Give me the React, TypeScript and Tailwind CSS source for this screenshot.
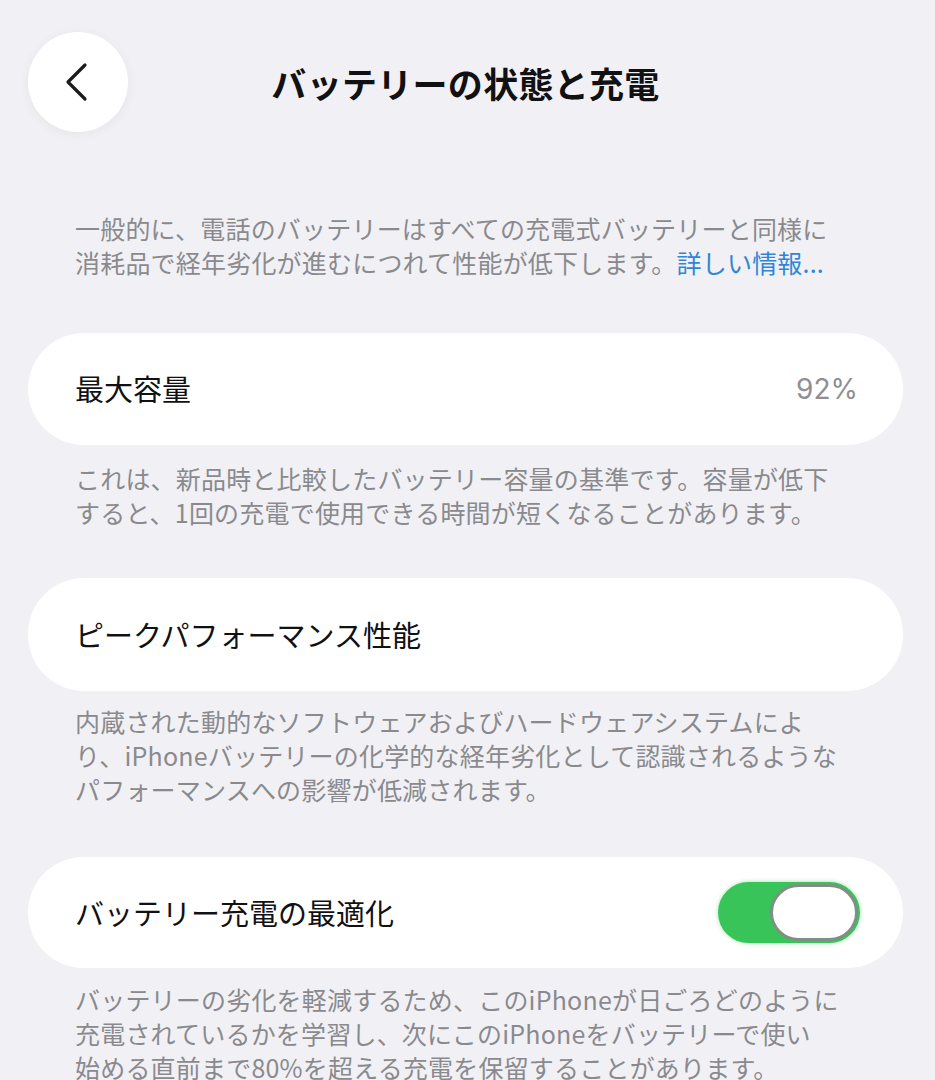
import React from "react";

const para = "text-[25px] leading-[34px] tracking-[0.2px] text-[#8a8a8e] pl-[75px] whitespace-nowrap";

function Lines({ lines }: { lines: React.ReactNode[] }) {
  return (
    <div className={para}>
      {lines.map((l, i) => (
        <div key={i}>{l}</div>
      ))}
    </div>
  );
}

export default function App() {
  return (
    <div className="w-[935px] h-[1080px] overflow-hidden bg-[#f1f1f5] font-['Noto_Sans_CJK_JP','Noto_Sans',sans-serif]">
      <div className="grid grid-cols-[100px_1fr_100px] items-center pt-[32px] pl-[28px] pr-[32px]">
        <div className="w-[100px] h-[100px] rounded-full bg-white shadow-[0_2px_12px_rgba(0,0,0,0.05)] flex items-center justify-center">
          <svg width="100" height="100" viewBox="0 0 100 100" fill="none">
            <path d="M57 33 L40 50 L57 67" stroke="#1c1c1e" strokeWidth="3.2" strokeLinecap="round" strokeLinejoin="round" />
          </svg>
        </div>
        <div className="text-center text-[35px] font-bold text-[#111113] leading-none tracking-[0.3px]">
          バッテリーの状態と充電
        </div>
        <div />
      </div>

      <div className="mt-[79px]">
        <Lines
          lines={[
            "一般的に、電話のバッテリーはすべての充電式バッテリーと同様に",
            <>
              消耗品で経年劣化が進むにつれて性能が低下します。<span className="text-[#2f86d6]">詳しい情報...</span>
            </>,
          ]}
        />
      </div>

      <div className="mt-[54px] ml-[28px] w-[875px] h-[112px] rounded-[56px] bg-white flex items-center justify-between pl-[47px] pr-[45px]">
        <span className="text-[29px] font-normal text-[#111113]">最大容量</span>
        <span className="text-[28px] text-[#8e8e93] font-['Inter','Liberation_Sans',sans-serif]">92%</span>
      </div>

      <div className="mt-[16px]">
        <Lines
          lines={[
            "これは、新品時と比較したバッテリー容量の基準です。容量が低下",
            "すると、1回の充電で使用できる時間が短くなることがあります。",
          ]}
        />
      </div>

      <div className="mt-[49px] ml-[28px] w-[875px] h-[113px] rounded-[56px] bg-white flex items-center pl-[47px] pr-[45px]">
        <span className="text-[29px] font-normal text-[#111113]">ピークパフォーマンス性能</span>
      </div>

      <div className="mt-[13px]">
        <Lines
          lines={[
            "内蔵された動的なソフトウェアおよびハードウェアシステムによ",
            "り、iPhoneバッテリーの化学的な経年劣化として認識されるような",
            "パフォーマンスへの影響が低減されます。",
          ]}
        />
      </div>

      <div className="mt-[51px] ml-[28px] w-[875px] h-[111px] rounded-[56px] bg-white flex items-center justify-between pl-[47px] pr-[43px]">
        <span className="text-[29px] font-normal text-[#111113]">バッテリー充電の最適化</span>
        <div className="w-[142px] h-[61px] rounded-full bg-[#38c458] shadow-[0_0_4px_rgba(56,196,88,0.5)] flex items-center justify-end p-[2px]">
          <div className="w-[88px] h-[57px] rounded-full bg-white border-[3px] border-[#7f8f83]" />
        </div>
      </div>

      <div className="mt-[14px]">
        <Lines
          lines={[
            "バッテリーの劣化を軽減するため、このiPhoneが日ごろどのように",
            "充電されているかを学習し、次にこのiPhoneをバッテリーで使い",
            "始める直前まで80%を超える充電を保留することがあります。",
          ]}
        />
      </div>
    </div>
  );
}
